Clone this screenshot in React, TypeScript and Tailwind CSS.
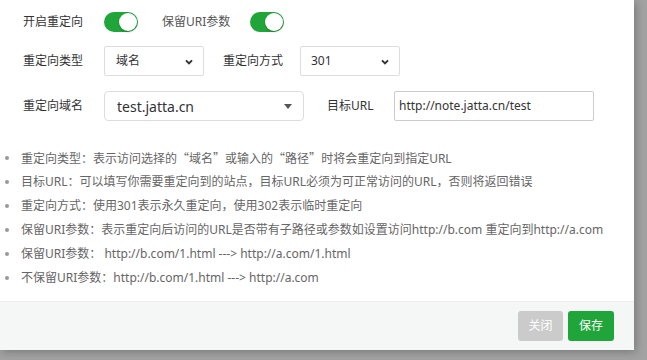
import React, { useState } from 'react'

const Toggle = ({ on, onClick }: { on: boolean; onClick: () => void }) => (
  <button
    onClick={onClick}
    className={`relative w-[34px] h-[20px] rounded-full ${on ? 'bg-[#20a53a]' : 'bg-[#ccc]'}`}
  >
    <span
      className={`absolute top-[1px] w-[18px] h-[18px] rounded-full bg-white shadow-[0_1px_2px_rgba(0,0,0,0.25)] ${on ? 'left-[15px]' : 'left-[1px]'}`}
    />
  </button>
)

const Chevron = () => (
  <svg width="10" height="10" viewBox="0 0 10 10" className="absolute right-[9px] top-[10px]">
    <path d="M2 3.4 L5 6.4 L8 3.4" fill="none" stroke="#333" strokeWidth="2" />
  </svg>
)

const Q = ({ c }: { c: string }) => (
  <span style={{ fontFamily: '"Noto Sans CJK SC", sans-serif' }}>{c}</span>
)

const notes: React.ReactNode[] = [
  <>
    重定向类型：表示访问选择的<Q c="“" />域名<Q c="”" />或输入的<Q c="“" />路径<Q c="”" />时将会重定向到指定URL
  </>,
  '目标URL：可以填写你需要重定向到的站点，目标URL必须为可正常访问的URL，否则将返回错误',
  '重定向方式：使用301表示永久重定向，使用302表示临时重定向',
  '保留URI参数：表示重定向后访问的URL是否带有子路径或参数如设置访问http://b.com 重定向到http://a.com',
  '保留URI参数： http://b.com/1.html ---> http://a.com/1.html',
  '不保留URI参数：http://b.com/1.html ---> http://a.com',
]

const App = () => {
  const [redirect, setRedirect] = useState(true)
  const [keepUri, setKeepUri] = useState(true)

  return (
    <section
      className="w-[647px] h-[360px] bg-[#a2a2a2] overflow-hidden"
      style={{ fontFamily: '"Noto Sans", "Noto Sans CJK SC", sans-serif' }}
    >
      <div className="w-[634px] h-[350px] bg-white flex flex-col shadow-[2px_2px_8px_rgba(0,0,0,0.25)]">
        <div className="flex-1 pl-[23px] text-[12px] text-[#555]">
          <div className="flex items-center h-[20px] mt-[12px]">
            <span className="w-[81px] text-[#333]">开启重定向</span>
            <Toggle on={redirect} onClick={() => setRedirect(!redirect)} />
            <span className="ml-[24px] w-[88px] text-[#555]">保留URI参数</span>
            <Toggle on={keepUri} onClick={() => setKeepUri(!keepUri)} />
          </div>

          <div className="flex items-center h-[30px] mt-[14px]">
            <span className="w-[81px] text-[#333]">重定向类型</span>
            <div className="relative w-[100px] h-[30px] border border-[#ddd] rounded-[2px] pl-[11px] flex items-center text-[#333]">
              域名
              <Chevron />
            </div>
            <span className="ml-[19px] w-[77px] text-[#333]">重定向方式</span>
            <div className="relative w-[100px] h-[30px] border border-[#ddd] rounded-[2px] pl-[10px] flex items-center text-[#333]">
              301
              <Chevron />
            </div>
          </div>

          <div className="flex items-center h-[30px] mt-[15px]">
            <span className="w-[81px] text-[#333]">重定向域名</span>
            <div className="relative w-[200px] h-[30px] border border-[#ddd] rounded-[4px] pl-[12px] flex items-center text-[14px] text-[#333]">
              test.jatta.cn
              <span className="absolute right-[11px] top-[12px] w-0 h-0 border-l-[4px] border-r-[4px] border-t-[5px] border-l-transparent border-r-transparent border-t-[#555]" />
            </div>
            <span className="ml-[23px] w-[67px] text-[#333]">目标URL</span>
            <div className="w-[200px] h-[30px] border border-[#ccc] rounded-[2px] pl-[4px] flex items-center text-[#333]">
              http://note.jatta.cn/test
            </div>
          </div>

          <ul className="mt-[25px] -ml-[23px] text-[#666]">
            {notes.map((n, i) => (
              <li key={i} className="flex items-center h-[24px]">
                <span className="w-[21px] flex justify-center pr-[7px]">
                  <span className="w-[4px] h-[4px] rounded-full bg-[#999]" />
                </span>
                <span>{n}</span>
              </li>
            ))}
          </ul>
        </div>

        <div className="h-[49px] bg-[#f5f7f6] border-t border-[#eee] flex items-center justify-end pr-[20px] gap-[5px]">
          <button className="w-[45px] h-[30px] rounded-[3px] bg-[#cbcbcb] text-white text-[12px]">关闭</button>
          <button className="w-[46px] h-[30px] rounded-[3px] bg-[#20a53a] text-white text-[12px]">保存</button>
        </div>
      </div>
    </section>
  )
}

export default App
